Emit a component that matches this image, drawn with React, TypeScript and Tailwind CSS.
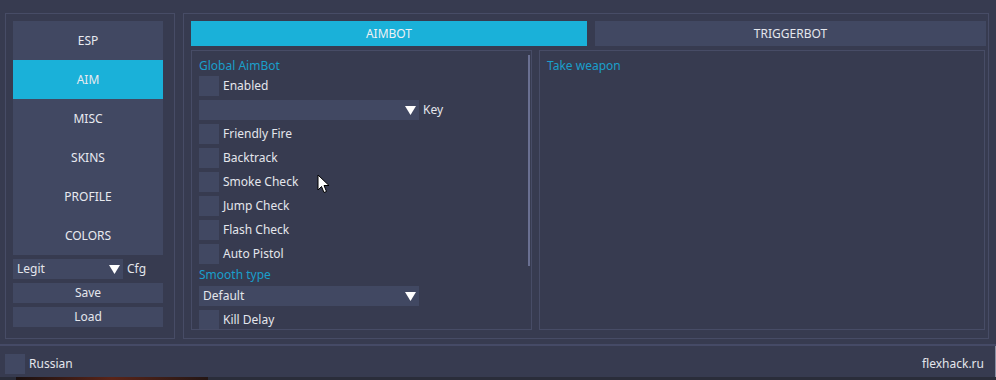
import React from 'react';

const font = { fontFamily: '"Noto Sans", "Open Sans", sans-serif' };

const Tri = () => (
  <svg width="11" height="9" viewBox="0 0 11 9" className="shrink-0">
    <polygon points="0,0 11,0 5.5,9" fill="#ffffff" />
  </svg>
);

const Check = ({ label, className = '' }: { label: string; className?: string }) => (
  <div className={`flex items-center h-[20px] gap-[4px] shrink-0 ${className}`}>
    <div className="w-[20px] h-[20px] bg-[#414862]" />
    <span className="text-[12px] text-[#e4e6ec]">{label}</span>
  </div>
);

const Select = ({ value, width, after, className = '' }: { value: string; width: string; after?: string; className?: string }) => (
  <div className={`flex items-center h-[20px] gap-[4px] shrink-0 ${className}`}>
    <div className={`${width} h-[20px] bg-[#414862] flex items-center justify-between pl-[4px] pr-[3px]`}>
      <span className="text-[12px] text-[#e4e6ec]">{value}</span>
      <Tri />
    </div>
    {after && <span className="text-[12px] text-[#e4e6ec]">{after}</span>}
  </div>
);

const menu = ['ESP', 'AIM', 'MISC', 'SKINS', 'PROFILE', 'COLORS'];

export default function App() {
  return (
    <div style={font} className="relative w-[996px] h-[380px] bg-[#373b50] flex flex-col overflow-hidden select-none">
      {/* main area */}
      <div className="flex gap-[8px] pt-[13px] pl-[5px] h-[339px]">
        {/* left panel */}
        <div className="w-[170px] h-[326px] border border-[#474c66] pt-[7px] pl-[7px]">
          <div className="w-[150px] flex flex-col">
            {menu.map((m) => (
              <div
                key={m}
                className={`h-[39px] flex items-center justify-center text-[12px] text-[#e8eaf0] ${
                  m === 'AIM' ? 'bg-[#1ab1d9]' : 'bg-[#414862]'
                }`}
              >
                {m}
              </div>
            ))}
          </div>
          <div className="mt-[4px] flex flex-col gap-[4px] w-[150px]">
            <Select value="Legit" width="w-[110px]" after="Cfg" />
            <div className="h-[20px] bg-[#414862] flex items-center justify-center text-[12px] text-[#e4e6ec]">Save</div>
            <div className="h-[20px] bg-[#414862] flex items-center justify-center text-[12px] text-[#e4e6ec]">Load</div>
          </div>
        </div>

        {/* right panel */}
        <div className="w-[806px] h-[326px] border border-[#474c66] pt-[7px] pl-[7px]">
          <div className="flex gap-[8px]">
            <div className="w-[396px] h-[25px] bg-[#1ab1d9] flex items-center justify-center text-[12px] text-[#eef0f4]">AIMBOT</div>
            <div className="w-[391px] h-[25px] bg-[#414862] flex items-center justify-center text-[12px] text-[#e4e6ec]">TRIGGERBOT</div>
          </div>
          <div className="flex gap-[7px] mt-[4px]">
            <div className="relative w-[341px] h-[280px] border border-[#474c66] overflow-hidden pl-[7px] pt-[5px]">
              <div className="absolute right-[1px] top-[4px] w-[2px] h-[211px] bg-[#6a7092]" />
              <div className="flex flex-col">
                <div className="h-[20px] flex items-center text-[12px] text-[#1a9fcb]">Global AimBot</div>
                <Check label="Enabled" />
                <Select value="" width="w-[220px]" after="Key" className="mt-[4px]" />
                <Check label="Friendly Fire" className="mt-[4px]" />
                <Check label="Backtrack" className="mt-[4px]" />
                <Check label="Smoke Check" className="mt-[4px]" />
                <Check label="Jump Check" className="mt-[4px]" />
                <Check label="Flash Check" className="mt-[4px]" />
                <Check label="Auto Pistol" className="mt-[4px]" />
                <div className="h-[22px] flex items-center text-[12px] text-[#1a9fcb]">Smooth type</div>
                <Select value="Default" width="w-[220px]" />
                <Check label="Kill Delay" className="mt-[4px]" />
              </div>
            </div>
            <div className="w-[446px] h-[280px] border border-[#474c66] pl-[7px] pt-[5px]">
              <div className="h-[20px] flex items-center text-[12px] text-[#1a9fcb]">Take weapon</div>
            </div>
          </div>
        </div>
      </div>

      {/* bottom bar */}
      <div className="h-[2px] mt-[5px] bg-[#454a66]" />
      <div className="h-[31px] flex items-start justify-between pt-[8px] pl-[5px] pr-[11px] border-r border-[#8a8fa3]">
        <div className="flex items-center gap-[4px]">
          <div className="w-[20px] h-[20px] bg-[#414862]" />
          <span className="text-[12px] text-[#e4e6ec]">Russian</span>
        </div>
        <span className="h-[20px] flex items-center text-[12px] text-[#e4e6ec]">flexhack.ru</span>
      </div>
      <div className="flex-1 flex bg-[#2a2d3a]">
        <div className="w-[16px]" />
        <div className="w-[192px] bg-gradient-to-r from-[#1a1010] via-[#5a2418] to-[#241614]" />
      </div>

      {/* mouse cursor */}
      <svg className="absolute left-[317px] top-[174px]" width="13" height="20" viewBox="0 0 13 20">
        <path d="M1 1 L1 16 L4.5 12.5 L7 18.5 L9.5 17.5 L7 11.5 L12 11.5 Z" fill="#ffffff" stroke="#000000" strokeWidth="1" />
      </svg>
    </div>
  );
}
